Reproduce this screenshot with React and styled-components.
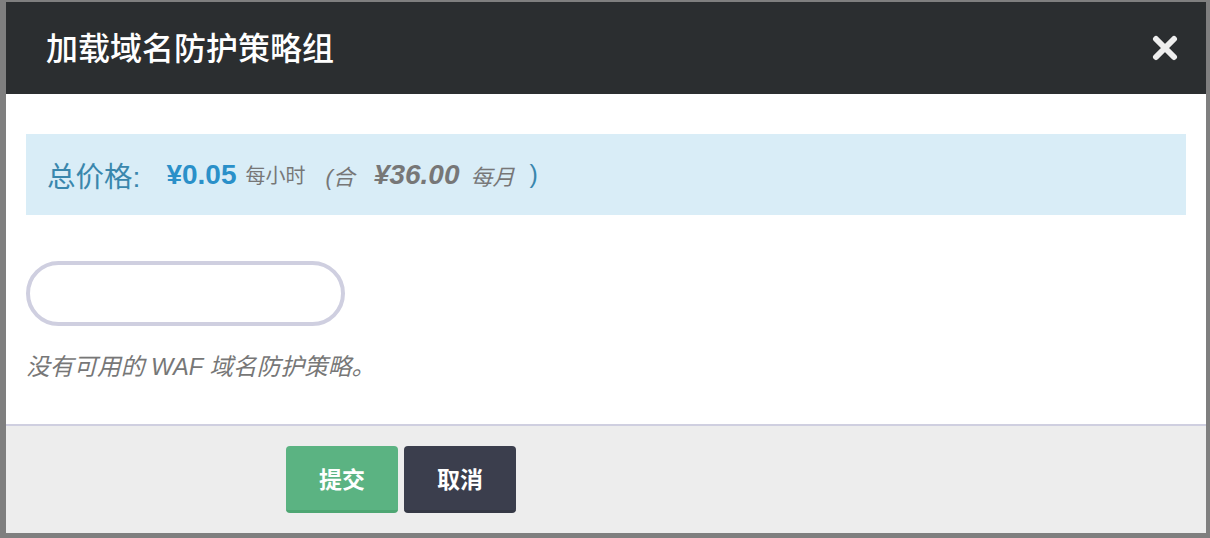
import React from "react";
import styled, { createGlobalStyle } from "styled-components";

const GlobalStyle = createGlobalStyle`
  html, body {
    margin: 0;
    padding: 0;
    background: #7f7f7f;
    font-family: "Liberation Sans", "Noto Sans CJK SC", sans-serif;
  }
  * {
    box-sizing: border-box;
  }
`;

const Overlay = styled.div`
  width: 1210px;
  height: 538px;
  padding: 2px 4px 5px 6px;
  background: #7f7f7f;
`;

const Modal = styled.div`
  width: 1200px;
  height: 531px;
  display: flex;
  flex-direction: column;
  background: #fff;
`;

const Header = styled.div`
  height: 92px;
  display: flex;
  align-items: center;
  justify-content: space-between;
  padding: 0 28px 5px 40px;
  background: #2b2e30;
`;

const Title = styled.h3`
  margin: 0;
  font-size: 32px;
  font-weight: 500;
  color: #fff;
`;

const CloseBtn = styled.button`
  width: 26px;
  height: 26px;
  margin-top: 5px;
  padding: 0;
  border: 0;
  background: none;
  cursor: pointer;
  display: flex;
  align-items: center;
  justify-content: center;
`;

const Body = styled.div`
  height: 330px;
  padding: 40px 20px 0 20px;
`;

const PriceBar = styled.div`
  height: 81px;
  display: flex;
  align-items: center;
  padding-left: 21px;
  background: #d9edf7;
  color: #3a87ad;
`;

const Label = styled.span`
  font-size: 28.5px;
  margin-right: 26px;
`;

const Price = styled.span`
  font-size: 28px;
  font-weight: bold;
  color: ${(p) => (p.$muted ? "#777" : "#2a90c9")};
  font-style: ${(p) => (p.$muted ? "italic" : "normal")};
  margin-right: ${(p) => (p.$muted ? "11px" : "9px")};
`;

const Unit = styled.span`
  font-size: ${(p) => p.$size || 20}px;
  color: #777;
  font-style: ${(p) => (p.$italic ? "italic" : "normal")};
  margin-right: ${(p) => p.$gap || 0}px;
`;

const Paren = styled.span`
  font-size: 25px;
`;

const Select = styled.div`
  width: 319px;
  height: 65px;
  margin-top: 46px;
  border: 4px solid #cfcfe0;
  border-radius: 33px;
  background: #fff;
`;

const Help = styled.p`
  margin: 22px 0 0 0;
  font-size: 23.7px;
  font-style: italic;
  color: #777;
`;

const Footer = styled.div`
  flex: 1;
  display: flex;
  gap: 6px;
  padding: 20px 0 0 280px;
  border-top: 2px solid #cfcfe0;
  background: #ededed;
`;

const Button = styled.button`
  width: 112px;
  height: 67px;
  border: 0;
  border-bottom: 3px solid ${(p) => (p.$primary ? "#4ea673" : "#353845")};
  border-radius: 4px;
  background: ${(p) => (p.$primary ? "#5bb382" : "#3b3e4d")};
  color: #fff;
  font-family: inherit;
  font-size: 23px;
  font-weight: bold;
  cursor: pointer;
`;

function CloseIcon() {
  return (
    <svg width="26" height="26" viewBox="0 0 26 26">
      <path
        d="M4 4 L22 22 M22 4 L4 22"
        stroke="#eeeeee"
        strokeWidth="6"
        strokeLinecap="round"
        fill="none"
      />
    </svg>
  );
}

export default function App() {
  return (
    <>
      <GlobalStyle />
      <Overlay>
        <Modal>
          <Header>
            <Title>加载域名防护策略组</Title>
            <CloseBtn aria-label="关闭">
              <CloseIcon />
            </CloseBtn>
          </Header>
          <Body>
            <PriceBar>
              <Label>总价格:</Label>
              <Price>¥0.05</Price>
              <Unit $gap={20}>每小时</Unit>
              <Unit $italic $size={22} $gap={19}>(合</Unit>
              <Price $muted>¥36.00</Price>
              <Unit $italic $size={22} $gap={15}>每月</Unit>
              <Paren>)</Paren>
            </PriceBar>
            <Select />
            <Help>没有可用的 WAF 域名防护策略。</Help>
          </Body>
          <Footer>
            <Button $primary>提交</Button>
            <Button>取消</Button>
          </Footer>
        </Modal>
      </Overlay>
    </>
  );
}
